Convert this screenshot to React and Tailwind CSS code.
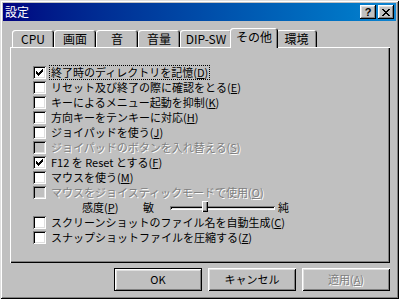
import React from "react";

const FONT = { fontFamily: '"Noto Sans CJK JP", "Liberation Sans", sans-serif' };

const items = [
  { label: "終了時のディレクトリを記憶", k: "D", checked: true, focus: true },
  { label: "リセット及び終了の際に確認をとる", k: "E" },
  { label: "キーによるメニュー起動を抑制", k: "K" },
  { label: "方向キーをテンキーに対応", k: "H" },
  { label: "ジョイパッドを使う", k: "J" },
  { label: "ジョイパッドのボタンを入れ替える", k: "S", disabled: true },
  { label: "F12 を Reset とする", k: "F", checked: true },
  { label: "マウスを使う", k: "M" },
  { label: "マウスをジョイスティックモードで使用", k: "O", disabled: true },
  { slider: true },
  { label: "スクリーンショットのファイル名を自動生成", k: "C" },
  { label: "スナップショットファイルを圧縮する", k: "Z" },
];

const tabs = [
  { t: "CPU", w: "w-[42px]" },
  { t: "画面", w: "w-[42px]" },
  { t: "音", w: "w-[42px]" },
  { t: "音量", w: "w-[42px]" },
  { t: "DIP-SW", w: "w-[52px]" },
  { t: "その他", w: "w-[48px]", sel: true },
  { t: "環境", w: "w-[41px]" },
];

function Check({ checked, disabled }) {
  const cols = [2, 3, 4, 3, 2, 1, 0];
  return (
    <div
      className={`relative w-[13px] h-[13px] shrink-0 ${disabled ? "bg-[#c0c0c0]" : "bg-white"} shadow-[inset_1px_1px_#808080,inset_-1px_-1px_#fff,inset_2px_2px_#000,inset_-2px_-2px_#dfdfdf]`}
    >
      {checked && (
        <svg className="absolute left-[3px] top-[3px]" width="7" height="7" viewBox="0 0 7 7" shapeRendering="crispEdges">
          {cols.map((r, i) => (
            <rect key={i} x={i} y={r} width="1" height="3" fill="#000" />
          ))}
        </svg>
      )}
    </div>
  );
}

function Label({ label, k, disabled, focus }) {
  const color = disabled ? "text-[#808080] [text-shadow:1px_1px_0_#fff]" : "text-black";
  return (
    <span
      className={`text-[11px] leading-[13px] whitespace-nowrap px-[1px] ${color} ${focus ? "outline-1 outline-dotted outline-black" : ""}`}
    >
      {label}(<span className="underline underline-offset-1">{k}</span>)
    </span>
  );
}

function Btn({ children, def, disabled }) {
  return (
    <div
      className={`w-[88px] h-[23px] flex items-center justify-center text-[11px] ${
        def
          ? "shadow-[inset_1px_1px_#000,inset_-1px_-1px_#000,inset_2px_2px_#fff,inset_-2px_-2px_#808080,inset_3px_3px_#dfdfdf]"
          : "shadow-[inset_1px_1px_#fff,inset_-1px_-1px_#000,inset_2px_2px_#dfdfdf,inset_-2px_-2px_#808080]"
      } ${disabled ? "text-[#808080] [text-shadow:1px_1px_0_#fff]" : "text-black"}`}
    >
      {children}
    </div>
  );
}

export default function App() {
  return (
    <div
      style={FONT}
      className="w-[399px] h-[299px] bg-[#c0c0c0] flex flex-col shadow-[inset_1px_1px_#dfdfdf,inset_-1px_-1px_#000,inset_2px_2px_#fff,inset_-2px_-2px_#808080] overflow-hidden"
    >
      {/* title bar */}
      <div className="mx-[3px] mt-[3px] h-[18px] flex items-center bg-gradient-to-r from-[#000080] to-[#1084d0] pl-[2px] pr-[2px]">
        <span className="text-white text-[12px] leading-none">設定</span>
        <div className="ml-auto flex gap-[2px]">
          <div className="w-[16px] h-[14px] bg-[#c0c0c0] flex items-center justify-center shadow-[inset_-1px_-1px_#000,inset_1px_1px_#fff,inset_-2px_-2px_#808080,inset_2px_2px_#dfdfdf]">
            <span className="text-[11px] font-bold leading-none text-black" style={{ fontFamily: '"Liberation Sans", sans-serif' }}>?</span>
          </div>
          <div className="w-[16px] h-[14px] bg-[#c0c0c0] flex items-center justify-center shadow-[inset_-1px_-1px_#000,inset_1px_1px_#fff,inset_-2px_-2px_#808080,inset_2px_2px_#dfdfdf]">
            <svg width="8" height="7" viewBox="0 0 8 7" shapeRendering="crispEdges">
              {[0, 1, 2, 3, 4, 5, 6].map((i) => (
                <React.Fragment key={i}>
                  <rect x={i} y={i} width="2" height="1" fill="#000" />
                  <rect x={6 - i} y={i} width="2" height="1" fill="#000" />
                </React.Fragment>
              ))}
            </svg>
          </div>
        </div>
      </div>

      {/* tabs */}
      <div className="mt-[7px] ml-[10px] h-[19px] flex items-end pl-[2px]">
        {tabs.map((tab) => (
          <div
            key={tab.t}
            className={`${tab.w} shrink-0 rounded-t-[3px] bg-[#c0c0c0] flex items-center justify-center text-[12px] leading-none text-black shadow-[inset_1px_1px_#fff,inset_-1px_0_#000,inset_-2px_0_#808080] ${
              tab.sel ? "h-[20px] -mx-[2px] -mb-[1px] relative z-10 pb-[2px]" : "h-[17px]"
            }`}
          >
            {tab.t}
          </div>
        ))}
      </div>

      {/* panel */}
      <div className="ml-[10px] w-[380px] h-[216px] bg-[#c0c0c0] shadow-[inset_1px_1px_#fff,inset_-1px_-1px_#000,inset_-2px_-2px_#808080] pt-[18px] pl-[23px] flex flex-col">
        {items.map((it, i) =>
          it.slider ? (
            <div key={i} className="h-[15px] flex items-center text-[11px] text-black">
              <span className="ml-[49px] w-[41px]">
                感度(<span className="underline underline-offset-1">P</span>)
              </span>
              <span className="ml-[20px]">敏</span>
              <div className="relative ml-[16px] w-[105px] h-[4px] shadow-[inset_1px_1px_#808080,inset_-1px_-1px_#fff,inset_2px_2px_#000,inset_-2px_-2px_#dfdfdf]">
                <div className="absolute left-[32px] top-[-5px] w-[6px] h-[11px] bg-[#c0c0c0] shadow-[inset_1px_1px_#fff,inset_-1px_-1px_#000,inset_-2px_-2px_#808080]" />
              </div>
              <span className="ml-[3px]">純</span>
            </div>
          ) : (
            <div key={i} className="h-[15px] flex items-center gap-[4px]">
              <Check checked={it.checked} disabled={it.disabled} />
              <Label {...it} />
            </div>
          )
        )}
      </div>

      {/* buttons */}
      <div className="mt-[5px] ml-[114px] flex gap-[6px]">
        <Btn def>OK</Btn>
        <Btn>キャンセル</Btn>
        <Btn disabled>
          適用(<span className="underline underline-offset-1">A</span>)
        </Btn>
      </div>
    </div>
  );
}
